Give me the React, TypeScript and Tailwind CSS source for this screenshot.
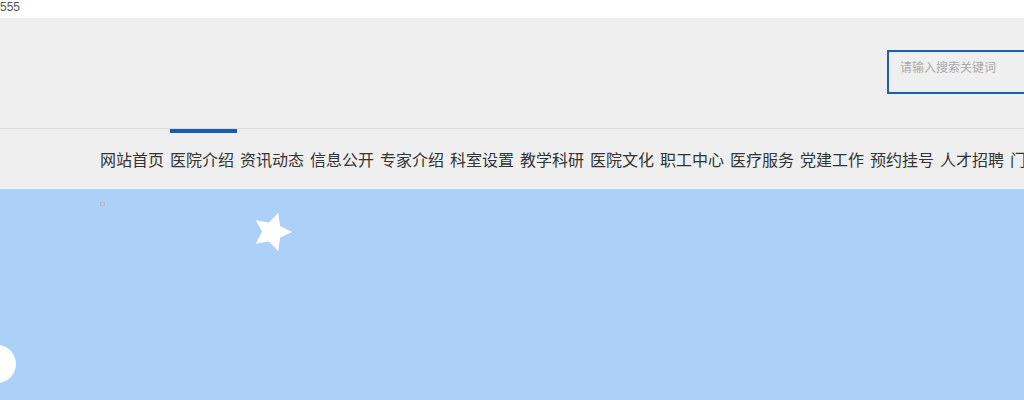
const navItems = [
  "网站首页",
  "医院介绍",
  "资讯动态",
  "信息公开",
  "专家介绍",
  "科室设置",
  "教学科研",
  "医院文化",
  "职工中心",
  "医疗服务",
  "党建工作",
  "预约挂号",
  "人才招聘",
  "门诊指南",
];

const cjk = { fontFamily: '"Noto Sans CJK SC", "Noto Sans", sans-serif' };

export default function App() {
  return (
    <div className="w-[1024px] h-[400px] overflow-hidden bg-white" style={cjk}>
      <div className="h-[18px] text-[12px] leading-[14px] text-[#555] font-['Liberation_Sans',sans-serif]">
        555
      </div>

      {/* header with search */}
      <div className="h-[111px] bg-[#efefef] border-b border-[#dcdcdc] flex items-start">
        <div className="ml-[887px] mt-[32px] w-[200px] h-[44px] shrink-0 border-2 border-[#1a5fb0] shadow-[inset_0_0_2px_#bfe8ff] px-[11px] pt-[7px] text-[12px] leading-[16px] text-[#aaa] whitespace-nowrap">
          请输入搜索关键词
        </div>
      </div>

      {/* nav */}
      <nav className="h-[60px] bg-[#efefef] flex pl-[100px] whitespace-nowrap">
        {navItems.map((item, i) => (
          <div key={item} className="relative shrink-0 w-[70px] h-full flex items-center">
            {i === 1 && (
              <span className="absolute left-0 top-0 w-[67px] h-[4px] bg-[#1a5cac]" />
            )}
            <span className="text-[16px] leading-[20px] text-[#333]">{item}</span>
          </div>
        ))}
      </nav>

      {/* banner */}
      <div className="relative h-[211px] bg-[#acd0f7] overflow-hidden">
        <span className="absolute left-[100px] top-[13px] w-[5px] h-[4px] border border-[#b0b8c8] rounded-t-[1px]" />
        <svg className="absolute left-[251px] top-[22px]" width="42" height="42" viewBox="-21 -21 42 42">
          <polygon
            fill="#fff"
            transform="rotate(18)"
            points="0,-20 5.9,-8.1 19,-6.2 9.5,2.9 11.8,16.2 0,9.9 -11.8,16.2 -9.5,2.9 -19,-6.2 -5.9,-8.1"
          />
        </svg>
        <span className="absolute left-[-22px] top-[156px] w-[38px] h-[38px] rounded-full bg-white" />
      </div>
    </div>
  );
}
